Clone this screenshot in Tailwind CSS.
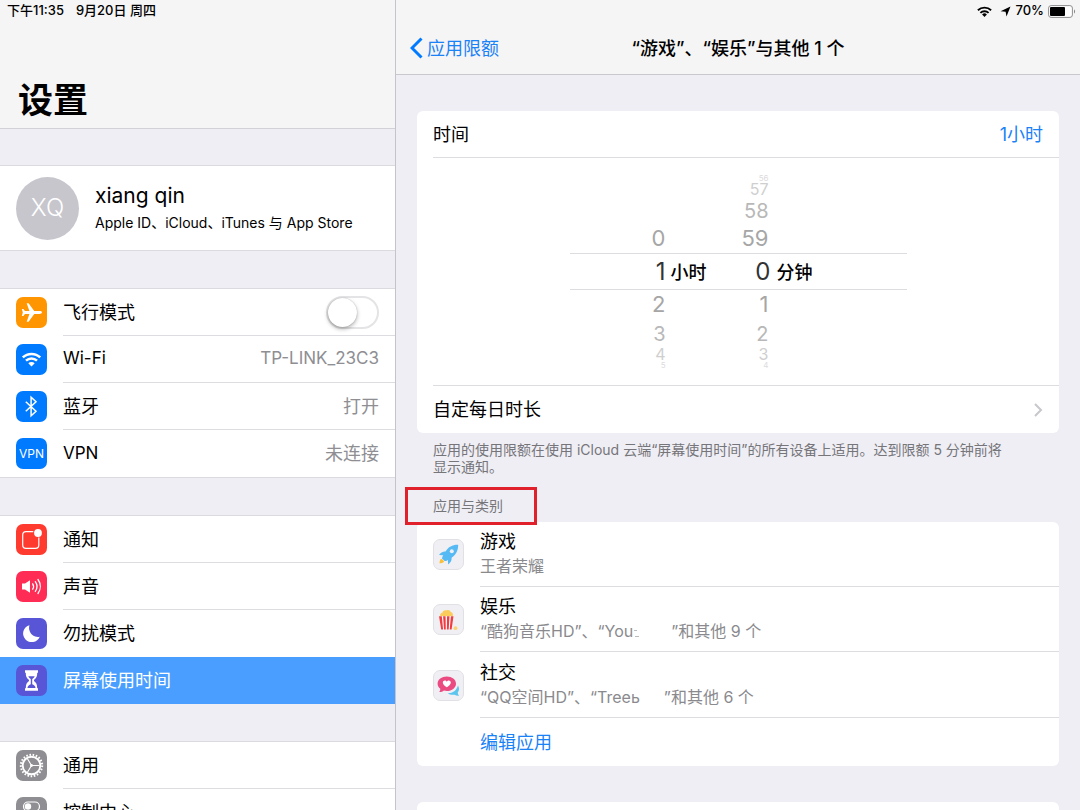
<!DOCTYPE html>
<html lang="zh-CN">
<head>
    <meta charset="UTF-8">
    <meta name="viewport" content="width=device-width, initial-scale=1.0">
    <title>设置</title>
    <script src="https://cdn.jsdelivr.net/npm/@tailwindcss/browser@4"></script>
</head>
<body class="flex h-screen overflow-hidden bg-[#efeef4] font-['Inter','Noto_Sans_CJK_SC',sans-serif] text-[18px] text-black">

    <!-- 侧边栏 -->
    <aside class="w-[396px] shrink-0 overflow-hidden border-r border-[#c5c4ca]">
        <header class="flex h-[129px] flex-col justify-between border-b border-[#d2d1d7] bg-[#f5f5f6]">
            <div class="flex h-[22px] items-center gap-3 pl-[7px] text-[13px] font-medium">
                <span>下午11:35</span>
                <span>9月20日 周四</span>
            </div>
            <h1 class="pb-[3px] pl-[18px] text-[35px] leading-[50px] font-bold">设置</h1>
        </header>

        <a href="#" class="mt-9 flex h-[86px] items-center gap-4 border-y border-[#dbdadf] bg-white pl-4">
            <span class="flex size-[63px] items-center justify-center rounded-full bg-[#c7c6cd] text-[24px] font-light text-white">XQ</span>
            <span class="flex flex-col gap-1">
                <span class="text-[21px] leading-[26px]">xiang qin</span>
                <span class="text-[14px] leading-5">Apple ID、iCloud、iTunes 与 App Store</span>
            </span>
        </a>

        <nav>
            <ul class="mt-[37px] border-t border-[#dbdadf] bg-white">
                <li class="flex h-[47px] items-center pl-4">
                    <svg class="size-[31px] shrink-0" viewBox="0 0 31 31">
                        <rect width="31" height="31" rx="7" fill="#ff9500"/>
                        <path fill="#fff" d="M26 15.500c0-.9-1.200-1.400-2.500-1.400h-5.300L12.600 6.300h-1.900l2.700 7.800H9L7.300 11.900H5.800l1 3.600-1 3.600h1.500L9 16.900h4.400l-2.700 7.800h1.900l5.600-7.800h5.300c1.300 0 2.500-.5 2.500-1.400z"/>
                    </svg>
                    <label for="airplane" class="ml-4 flex h-full flex-1 items-center justify-between border-b border-[#dddce1] pr-4">
                        飞行模式
                        <input type="checkbox" id="airplane" class="relative h-[33px] w-[53px] appearance-none rounded-full border-2 border-[#e4e4e6] bg-white before:absolute before:top-0 before:left-0 before:size-[29px] before:rounded-full before:bg-white before:shadow-[0_2px_4px_rgba(0,0,0,0.3),0_0_1px_rgba(0,0,0,0.3)]">
                    </label>
                </li>
                <li>
                    <a href="#" class="flex h-[47px] items-center pl-4">
                        <svg class="size-[31px] shrink-0" viewBox="0 0 31 31">
                            <rect width="31" height="31" rx="7" fill="#007aff"/>
                            <g fill="none" stroke="#fff" stroke-width="2.500">
                                <path d="M6.800 13.400a12.500 12.500 0 0 1 17.400 0"/>
                                <path d="M10 16.700a8 8 0 0 1 11 0"/>
                            </g>
                            <path fill="#fff" d="M12.300 19.200a4.600 4.600 0 0 1 6.400 0l-3.200 3.300z"/>
                        </svg>
                        <span class="ml-4 flex h-full flex-1 items-center justify-between border-b border-[#dddce1] pr-4 text-[17px]">Wi-Fi <span class="text-[#8e8e93]">TP-LINK_23C3</span></span>
                    </a>
                </li>
                <li>
                    <a href="#" class="flex h-[47px] items-center pl-4">
                        <svg class="size-[31px] shrink-0" viewBox="0 0 31 31">
                            <rect width="31" height="31" rx="7" fill="#007aff"/>
                            <path fill="none" stroke="#fff" stroke-width="1.500" d="M9.800 10.700l10.200 9.600-4.900 4.400V6.300l4.900 4.400-10.200 9.600"/>
                        </svg>
                        <span class="ml-4 flex h-full flex-1 items-center justify-between border-b border-[#dddce1] pr-4">蓝牙 <span class="text-[#8e8e93]">打开</span></span>
                    </a>
                </li>
                <li>
                    <a href="#" class="flex h-12 items-center border-b border-[#dbdadf] pl-4">
                        <span class="flex size-[31px] shrink-0 items-center justify-center rounded-[7px] bg-[#007aff] text-[12px] text-white">VPN</span>
                        <span class="ml-4 flex flex-1 items-center justify-between pr-4"><span class="text-[17px]">VPN</span> <span class="text-[#8e8e93]">未连接</span></span>
                    </a>
                </li>
            </ul>

            <ul class="mt-[37px] border-t border-[#dbdadf] bg-white">
                <li>
                    <a href="#" class="flex h-[47px] items-center pl-4">
                        <svg class="size-[31px] shrink-0" viewBox="0 0 31 31">
                            <rect width="31" height="31" rx="7" fill="#ff3b30"/>
                            <path fill="none" stroke="#fff" stroke-width="1.200" d="M17.300 7.700H10A3.300 3.300 0 0 0 6.700 11v10a3.300 3.300 0 0 0 3.300 3.300h9.500a3.300 3.300 0 0 0 3.300-3.300v-7.500"/>
                            <circle cx="22" cy="9" r="3.900" fill="#fff"/>
                        </svg>
                        <span class="ml-4 flex h-full flex-1 items-center border-b border-[#dddce1]">通知</span>
                    </a>
                </li>
                <li>
                    <a href="#" class="flex h-[47px] items-center pl-4">
                        <svg class="size-[31px] shrink-0" viewBox="0 0 31 31">
                            <rect width="31" height="31" rx="7" fill="#ff2d55"/>
                            <path fill="#fff" d="M6 12.500h3l5-3.300v12.600l-5-3.300H6z"/>
                            <g fill="none" stroke="#fff" stroke-width="1.300" stroke-linecap="round">
                                <path d="M16.700 12.800a5 5 0 0 1 0 5.400"/>
                                <path d="M19.300 10.700a8 8 0 0 1 0 9.600"/>
                                <path d="M22 8.500a12 12 0 0 1 0 14"/>
                            </g>
                        </svg>
                        <span class="ml-4 flex h-full flex-1 items-center border-b border-[#dddce1]">声音</span>
                    </a>
                </li>
                <li>
                    <a href="#" class="flex h-[47px] items-center pl-4">
                        <svg class="size-[31px] shrink-0" viewBox="0 0 31 31">
                            <rect width="31" height="31" rx="7" fill="#5856d6"/>
                            <path fill="#fff" d="M13.500 7.200a8.600 8.600 0 1 0 10.200 11.500A8.900 8.900 0 0 1 13.500 7.200z"/>
                        </svg>
                        <span class="ml-4 flex h-full flex-1 items-center">勿扰模式</span>
                    </a>
                </li>
                <li>
                    <a href="#" aria-current="page" class="flex h-[47px] items-center bg-[#4a9eff] pl-4 text-white">
                        <svg class="size-[31px] shrink-0" viewBox="0 0 31 31">
                            <rect width="31" height="31" rx="7" fill="#5856d6"/>
                            <path fill="#fff" d="M9 5.300h13v2.500h-.8c0 4.200-1.200 5.700-3.200 7.100v1.200c2 1.400 3.200 3.200 3.200 7.100h.8v2.500H9v-2.500h.8c0-3.900 1.200-5.700 3.200-7.100v-1.200c-2-1.400-3.200-2.900-3.200-7.100H9z"/>
                            <path fill="#5856d6" d="M12.300 11.300h6.400c-.6 1.400-1.700 2-2.500 2.900v5c1.500.5 3 1.700 3.400 3.700h-8.200c.4-2 1.900-3.200 3.400-3.700v-5c-.8-.9-1.900-1.500-2.500-2.900z"/>
                        </svg>
                        <span class="ml-4 flex-1">屏幕使用时间</span>
                    </a>
                </li>
            </ul>

            <ul class="mt-[37px] border-t border-[#dbdadf] bg-white">
                <li>
                    <a href="#" class="flex h-[47px] items-center pl-4">
                        <svg class="size-[31px] shrink-0" viewBox="0 0 31 31">
                            <rect width="31" height="31" rx="7" fill="#8e8e93"/>
                            <g fill="none" stroke="#fff">
                                <circle cx="15.500" cy="15.500" r="10.700" stroke-width="2" stroke-dasharray="1.600 1.601"/>
                                <circle cx="15.500" cy="15.500" r="8.800" stroke-width="1.900"/>
                                <path stroke-width="1.100" d="M15.500 15.500h8M15.500 15.500l-4.200-7M15.500 15.500l-4.200 7"/>
                            </g>
                            <circle cx="15.500" cy="15.500" r="1.400" fill="#fff"/>
                        </svg>
                        <span class="ml-4 flex h-full flex-1 items-center border-b border-[#dddce1]">通用</span>
                    </a>
                </li>
                <li>
                    <a href="#" class="flex h-[47px] items-center pl-4">
                        <svg class="size-[31px] shrink-0" viewBox="0 0 31 31">
                            <rect width="31" height="31" rx="7" fill="#8e8e93"/>
                            <rect x="7.500" y="5" width="16" height="9" rx="4.500" fill="none" stroke="#fff" stroke-width="1.200"/>
                            <circle cx="12" cy="9.500" r="3.200" fill="#fff"/>
                            <rect x="7" y="16.500" width="17" height="10" rx="5" fill="#fff"/>
                            <circle cx="19" cy="21.500" r="3.500" fill="#8e8e93"/>
                        </svg>
                        <span class="ml-4 flex h-full flex-1 items-center">控制中心</span>
                    </a>
                </li>
            </ul>
        </nav>
    </aside>

    <!-- 详情 -->
    <main class="flex min-w-0 flex-1 flex-col overflow-hidden">
        <header class="border-b border-[#c9c8cd] bg-[#f5f5f6]">
            <div class="flex h-[22px] items-center justify-end gap-1 pr-1 text-[13px] font-medium">
                <svg class="h-[11px] w-[15px]" viewBox="0 0 15 11">
                    <g fill="none" stroke="#000" stroke-width="1.900">
                        <path d="M.9 4.300a9.500 9.500 0 0 1 13.200 0"/>
                        <path d="M3.400 6.900a6 6 0 0 1 8.200 0"/>
                    </g>
                    <path d="M5.100 8.500a3.500 3.500 0 0 1 4.800 0L7.500 11z"/>
                </svg>
                <svg class="ml-1 size-[11px]" viewBox="0 0 11 11"><path d="M10.500.5L6.500 10.500 5.600 5.800.6 5.200z"/></svg>
                <span>70%</span>
                <svg class="h-[13px] w-7" viewBox="0 0 28 13">
                    <rect x=".6" y=".6" width="23.800" height="11.800" rx="2.500" fill="#fff" stroke="#8c8c8e"/>
                    <rect x="2" y="2" width="15" height="9" rx="1"/>
                    <path fill="#8c8c8e" d="M26 4.500c1.400.4 1.400 3.600 0 4z"/>
                </svg>
            </div>
            <div class="grid h-[52px] grid-cols-[1fr_auto_1fr] items-center pl-[14px]">
                <a href="#" class="flex items-center gap-1 text-[#1a82f7]">
                    <svg class="h-[22px] w-[13px]" viewBox="0 0 13 22"><path fill="none" stroke="#007aff" stroke-width="3" d="M11.500 1.500L2 11l9.500 9.500"/></svg>
                    应用限额
                </a>
                <h2 class="pr-[14px] font-medium">“游戏”、“娱乐”与其他 1 个</h2>
            </div>
        </header>

        <div class="flex-1 px-[21px] pt-9">
            <section class="rounded-md bg-white pl-4">
                <div class="flex h-[47px] items-center justify-between border-b border-[#dddce1] pr-4">
                    <span>时间</span>
                    <span class="text-[#1a82f7]">1小时</span>
                </div>

                <!-- 时间滚轮 -->
                <div class="flex justify-center border-b border-[#dddce1] pt-4 pr-4 pb-4 text-[#a6a6a6]">
                    <div class="w-[337px]">
                        <div class="grid h-2 grid-cols-[96px_103px] text-right text-[8px] leading-2 text-[#dcdcdc]"><span></span><span>56</span></div>
                        <div class="grid h-[14px] grid-cols-[96px_103px] items-center text-right text-[16px] leading-[14px] text-[#cfcfcf]"><span></span><span>57</span></div>
                        <div class="grid h-7 grid-cols-[96px_103px] items-center text-right text-[20px] text-[#b8b8b8]"><span></span><span>58</span></div>
                        <div class="grid h-[29px] grid-cols-[96px_103px] items-center text-right text-[22px] leading-[29px]"><span>0</span><span>59</span></div>
                        <div class="grid h-[37px] grid-cols-[96px_41px_64px_1fr] items-center border-y border-[#dddce1] text-right text-[24px] text-[#333]">
                            <span>1</span>
                            <span class="text-[18px] font-medium text-black">小时</span>
                            <span>0</span>
                            <span class="pl-[6px] text-left text-[18px] font-medium text-black">分钟</span>
                        </div>
                        <div class="grid h-[29px] grid-cols-[96px_103px] items-center text-right text-[22px] leading-[29px]"><span>2</span><span>1</span></div>
                        <div class="grid h-7 grid-cols-[96px_103px] items-center text-right text-[20px] text-[#b8b8b8]"><span>3</span><span>2</span></div>
                        <div class="grid h-[14px] grid-cols-[96px_103px] items-center text-right text-[16px] leading-[14px] text-[#cfcfcf]"><span>4</span><span>3</span></div>
                        <div class="grid h-2 grid-cols-[96px_103px] text-right text-[8px] leading-2 text-[#dcdcdc]"><span>5</span><span>4</span></div>
                    </div>
                </div>

                <a href="#" class="flex h-[47px] items-center justify-between pr-4">
                    自定每日时长
                    <svg class="h-[14px] w-[9px]" viewBox="0 0 9 14"><path fill="none" stroke="#c7c7cc" stroke-width="2" d="M1 1l6 6-6 6"/></svg>
                </a>
            </section>

            <p class="pt-2 pr-12 pl-4 text-[14px] leading-[17px] text-[#75757a]">应用的使用限额在使用 iCloud 云端“屏幕使用时间”的所有设备上适用。达到限额 5 分钟前将显示通知。</p>

            <div class="relative mt-3 h-[35px] px-4">
                <h3 class="pt-[9px] text-[14px] leading-5 text-[#75757a]">应用与类别</h3>
                <div class="absolute top-0 -left-3 h-[38px] w-[132px] border-3 border-[#e0202b]"></div>
            </div>

            <section class="rounded-md bg-white">
                <ul>
                    <li class="flex h-[65px] items-center pl-4">
                        <svg class="size-[31px] shrink-0" viewBox="0 0 31 31">
                            <rect x=".5" y=".5" width="30" height="30" rx="6.500" fill="#f0eff4" stroke="#e1e0e5"/>
                            <path fill="#55b9f3" d="M25.200 5.800c-5.500-.2-9.700 2-12.700 6.700-2.700-.2-4.800 1-6.500 3.600l4.200.1c-.8 1.300-1.200 2.400-1.200 3.200l2.700 2.700c.9 0 2-.4 3.200-1.200l.2 4.600c2.600-1.700 3.700-3.900 3.500-6.700 4.500-3.200 6.600-7.400 6.600-13z"/>
                            <circle cx="18.800" cy="12.200" r="2" fill="#f0eff4"/>
                            <path fill="#f8c13c" d="M8.600 19.700c-1.500.4-2.100 2.100-2.100 4.600 2.500 0 4.200-.6 4.600-2.100z"/>
                        </svg>
                        <div class="ml-4 flex h-full flex-1 flex-col justify-center border-b border-[#dddce1]">
                            <span class="leading-6">游戏</span>
                            <span class="text-[16px] leading-6 text-[#8a8a8e]">王者荣耀</span>
                        </div>
                    </li>
                    <li class="flex h-[65px] items-center pl-4">
                        <svg class="size-[31px] shrink-0" viewBox="0 0 31 31">
                            <rect x=".5" y=".5" width="30" height="30" rx="6.500" fill="#f0eff4" stroke="#e1e0e5"/>
                            <path fill="#fbcb5b" d="M7.500 12.500c-1-2.300.4-3.800 2-4 .6-2 2.500-2.800 4-2.100 1.700-.9 3.700-.2 4.200 1.500 2 .4 2.900 2.500 1.900 4.600z"/>
                            <path fill="#fff" d="M6 12.300h14.500l-1.900 13.200H8.200z"/>
                            <path fill="#ee3e44" d="M6 12.300h2.800l1.300 13.200H8.200zM10.100 12.300h2.500l.2 13.200h-1.800zM14 12.300h2.500l-.8 13.200h-1.800zM17.900 12.300h2.600l-1.900 13.200h-1.900z"/>
                            <circle cx="22.500" cy="24.200" r="1.900" fill="#fbd375"/>
                        </svg>
                        <div class="ml-4 flex h-full flex-1 flex-col justify-center border-b border-[#dddce1]">
                            <span class="leading-6">娱乐</span>
                            <span class="text-[16px] leading-6 text-[#8a8a8e]">“酷狗音乐HD”、“You<span class="inline-block w-[38px] pl-px leading-4"><svg class="size-2" viewBox="0 0 8 8"><path fill="none" stroke="#bbb" d="M0 1.500h3M1 7.500h4"/></svg></span>”和其他 9 个</span>
                        </div>
                    </li>
                    <li class="flex h-[66px] items-center pl-4">
                        <svg class="size-[31px] shrink-0" viewBox="0 0 31 31">
                            <rect x=".5" y=".5" width="30" height="30" rx="6.500" fill="#f0eff4" stroke="#e1e0e5"/>
                            <path fill="#5cc5ee" d="M25 15.500c1.500 2.600 1.400 5-.3 7 0 1.200.5 2.300 1.400 3.300-1.800.2-3.300-.2-4.500-1.100-2.600.4-4.900-.1-6.900-1.500 5 .2 8.600-2.500 10.300-7.700z"/>
                            <path fill="#ea4c82" d="M13.800 6.500c5.100 0 9.200 3.100 9.200 7.200s-4.100 7.300-9.200 7.300c-1 0-2-.1-2.900-.4-1.200 1-2.700 1.500-4.700 1.500.8-1 1.200-2.100 1.100-3.300-1.700-1.300-2.700-3.100-2.700-5.100 0-4.100 4.100-7.200 9.200-7.200z"/>
                            <path fill="#fff" d="M13.800 17.300c-2.900-1.900-4-3.200-4-4.700 0-2.300 2.900-2.900 4-.9 1.100-2 4-1.400 4 .9 0 1.500-1.100 2.800-4 4.700z"/>
                        </svg>
                        <div class="ml-4 flex h-full flex-1 flex-col justify-center border-b border-[#dddce1]">
                            <span class="leading-6">社交</span>
                            <span class="text-[16px] leading-6 text-[#8a8a8e]">“QQ空间HD”、“Treeь<span class="inline-block w-6"></span>”和其他 6 个</span>
                        </div>
                    </li>
                </ul>
                <button type="button" class="block h-12 w-full pl-[63px] text-left text-[#1a82f7]">编辑应用</button>
            </section>

            <section class="mt-9 h-12 rounded-md bg-white"></section>
        </div>
    </main>
</body>
</html>
